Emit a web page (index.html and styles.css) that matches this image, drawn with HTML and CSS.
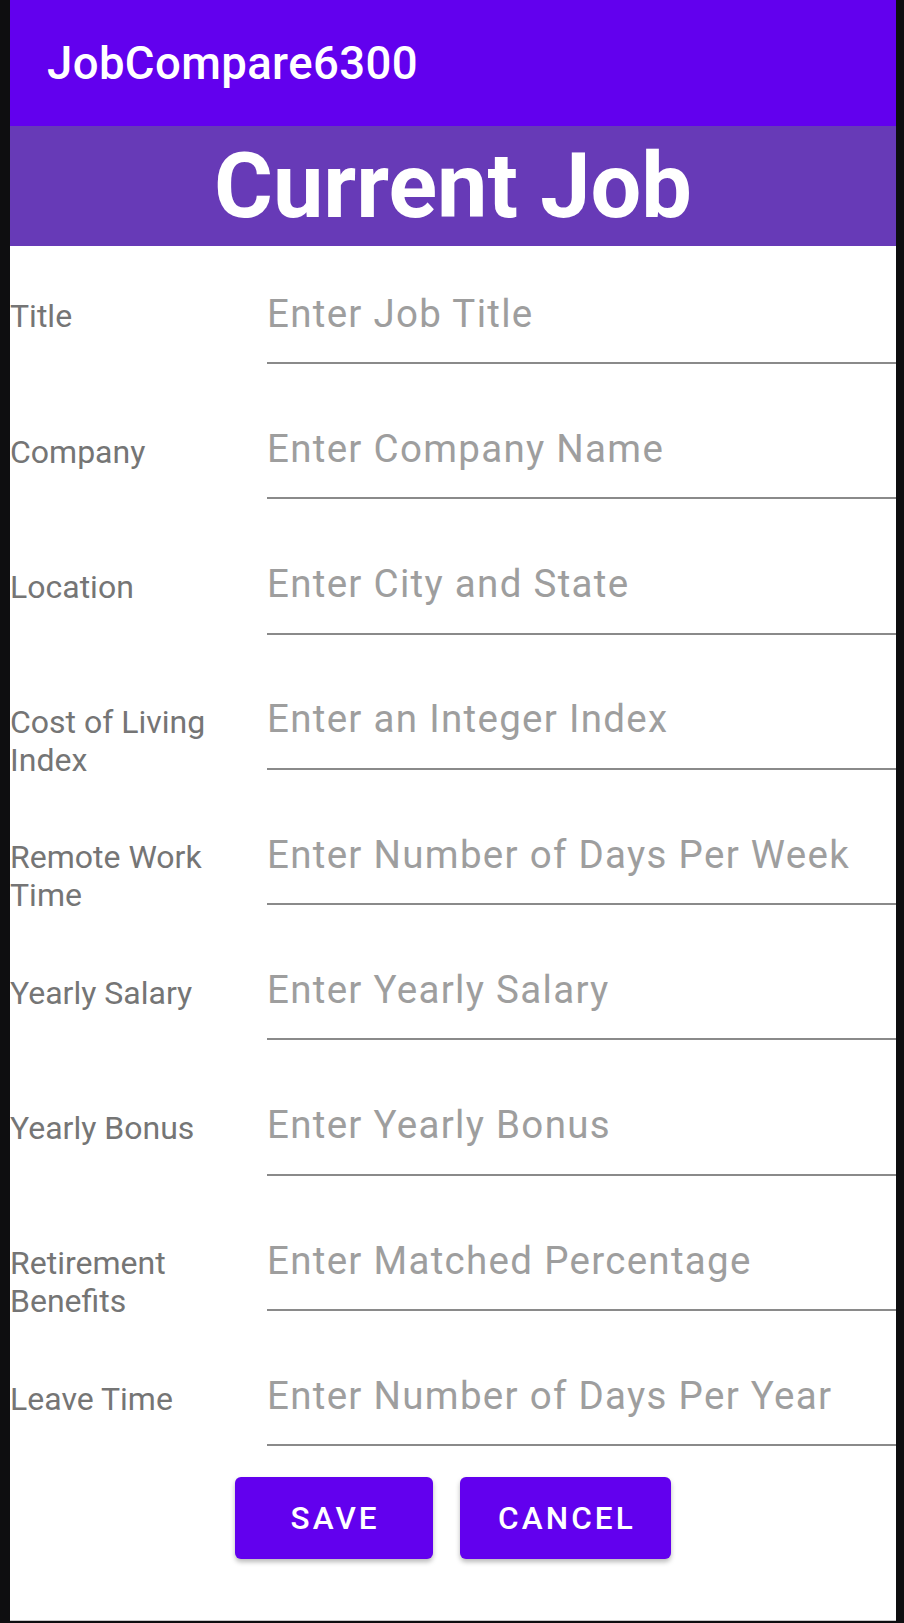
FILE: index.html
```html
<!DOCTYPE html>
<html lang="en">
<head>
<meta charset="utf-8">
<title>JobCompare6300</title>
<link rel="stylesheet" href="styles.css">
</head>
<body>
<div class="screen">
  <header class="appbar"><span class="appbar-title">JobCompare6300</span></header>
  <div class="banner"><h1 class="banner-title">Current Job</h1></div>
  <form class="form">
    <div class="row"><label class="label">Title</label><div class="field"><span class="hint">Enter Job Title</span></div></div>
    <div class="row"><label class="label">Company</label><div class="field"><span class="hint">Enter Company Name</span></div></div>
    <div class="row"><label class="label">Location</label><div class="field"><span class="hint">Enter City and State</span></div></div>
    <div class="row"><label class="label">Cost of Living<br>Index</label><div class="field"><span class="hint">Enter an Integer Index</span></div></div>
    <div class="row"><label class="label">Remote Work<br>Time</label><div class="field"><span class="hint">Enter Number of Days Per Week</span></div></div>
    <div class="row"><label class="label">Yearly Salary</label><div class="field"><span class="hint">Enter Yearly Salary</span></div></div>
    <div class="row"><label class="label">Yearly Bonus</label><div class="field"><span class="hint">Enter Yearly Bonus</span></div></div>
    <div class="row"><label class="label">Retirement<br>Benefits</label><div class="field"><span class="hint">Enter Matched Percentage</span></div></div>
    <div class="row"><label class="label">Leave Time</label><div class="field"><span class="hint">Enter Number of Days Per Year</span></div></div>
    <div class="actions">
      <button type="button" class="btn btn-save">SAVE</button>
      <button type="button" class="btn">CANCEL</button>
    </div>
  </form>
</div>
</body>
</html>
```
FILE: styles.css
```css
html, body {
  margin: 0;
  padding: 0;
  background: #0e0e10;
}
body {
  width: 904px;
  height: 1623px;
  overflow: hidden;
  font-family: Roboto, "Noto Sans", "Liberation Sans", sans-serif;
}
.screen {
  margin-left: 10px;
  width: 886px;
  height: 1620px;
  background: #ffffff;
  border-bottom: 1px solid #c8c8c8;
  display: flex;
  flex-direction: column;
}
.appbar {
  height: 126px;
  background: #6200ee;
  display: flex;
  align-items: center;
  padding-left: 37px;
  box-sizing: border-box;
}
.appbar-title {
  color: #ffffff;
  font-size: 45.5px;
  font-weight: 500;
  letter-spacing: 0.4px;
  line-height: 52px;
  margin-top: 2px;
}
.banner {
  height: 120px;
  background: #673ab7;
  display: flex;
  align-items: center;
  justify-content: center;
}
.banner-title {
  margin: 0;
  color: #ffffff;
  font-size: 90px;
  font-weight: 700;
  line-height: 106px;
  margin-top: 2px;
}
.form {
  display: flex;
  flex-direction: column;
}
.row {
  height: 135.3px;
  display: flex;
  flex-shrink: 0;
}
.label {
  width: 257px;
  flex-shrink: 0;
  box-sizing: border-box;
  padding-top: 52.3px;
  font-size: 32px;
  line-height: 37.5px;
  color: #757575;
}
.field {
  flex: 1;
  height: 118px;
  box-sizing: border-box;
  padding-top: 45.6px;
  border-bottom: 2px solid #8a8a8a;
}
.hint {
  display: block;
  font-size: 38.5px;
  letter-spacing: 1.3px;
  line-height: 44px;
  color: #9e9e9e;
  white-space: nowrap;
}
.actions {
  display: flex;
  justify-content: center;
  gap: 27px;
  margin-top: 13px;
}
.btn {
  height: 82px;
  min-width: 198px;
  padding: 2px 35.5px 0 38.5px;
  border: none;
  border-radius: 6px;
  background: #6200ee;
  color: #ffffff;
  font-family: Roboto, "Noto Sans", "Liberation Sans", sans-serif;
  font-size: 31.5px;
  font-weight: 500;
  letter-spacing: 3.1px;
  box-shadow: 0 3px 5px rgba(0, 0, 0, 0.28);
}
```
